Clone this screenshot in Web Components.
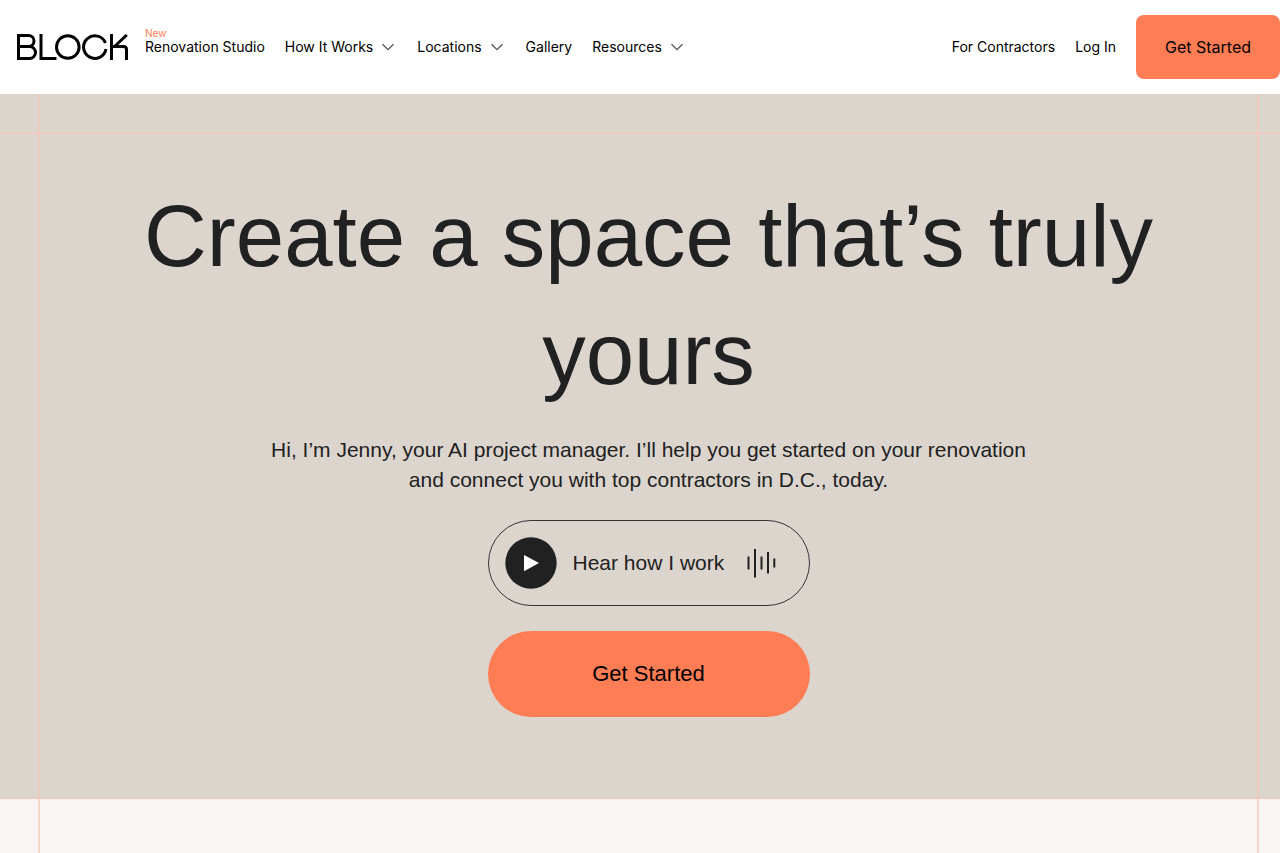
<!DOCTYPE html>
<html lang="en">
<head>
<meta charset="utf-8">
<meta name="viewport" content="width=device-width, initial-scale=1">
<title>Block Renovation</title>
<style>
  :root { --coral: #ff7d55; --ink: #212121; --sand: #dcd5ce; --paper: #f7f6f4; --rule: #f3c6b8; --rule-soft: #edcabd; --display: "Liberation Sans", Arial, sans-serif; }
  body { margin: 0; min-height: 100vh; display: flex; flex-direction: column; background: var(--paper); color: var(--ink); font-family: Inter, sans-serif; }
  block-hero { flex: none; }
  block-section { flex: 1; }
</style>
</head>
<body>
<block-header>
  <block-logo slot="logo"></block-logo>
  <nav-item href="#studio" tag="New">Renovation Studio</nav-item>
  <nav-item menu>How It Works</nav-item>
  <nav-item menu>Locations</nav-item>
  <nav-item href="#gallery">Gallery</nav-item>
  <nav-item menu>Resources</nav-item>
  <nav-item slot="account" href="#contractors">For Contractors</nav-item>
  <nav-item slot="account" href="#login">Log In</nav-item>
  <cta-button slot="account" kind="nav">Get Started</cta-button>
</block-header>
<block-hero>
  <span slot="title">Create a space that’s truly yours</span>
  <span slot="intro">Hi, I’m Jenny, your AI project manager. I’ll help you get started on your renovation and connect you with top contractors in D.C., today.</span>
  <audio-button>Hear how I work</audio-button>
  <cta-button>Get Started</cta-button>
</block-hero>
<block-section></block-section>

<script>
const define = (name, markup, setup) => {
  const template = document.createElement('template');
  template.innerHTML = markup;
  customElements.define(name, class extends HTMLElement {
    constructor() {
      super();
      this.attachShadow({ mode: 'open' }).append(template.content.cloneNode(true));
    }
    connectedCallback() { if (setup) setup(this, this.shadowRoot); }
  });
};

define('block-logo', `
  <style>
    :host { display: block; }
    a, svg { display: block; }
  </style>
  <a href="#home" aria-label="Block home">
    <svg width="112" height="26" viewBox="0 0 112 26" fill="none" stroke="#000" stroke-width="3" aria-hidden="true">
      <path d="M1.5 12.500V1.500H11.500a5.500 5.500 0 0 1 0 11H1.500M11.500 12.500h1a6 6 0 0 1 0 12H1.500V11"/>
      <path d="M24 0V24.5H39.5"/>
      <circle cx="50.8" cy="13" r="11.3"/>
      <path d="M88.4 9A11.3 11.3 0 1 0 89 15"/>
      <path d="M94.5 0V26M94.500 12.500H106.500Q109.500 12.500 109.500 15.500V26M97.500 12.500L109.800 1"/>
    </svg>
  </a>`);

define('nav-item', `
  <style>
    :host { display: grid; position: relative; font-size: 14px; line-height: 16px; color: #000; white-space: nowrap; }
    a, button { display: flex; align-items: center; gap: 8px; margin: 0; padding: 0; border: 0; background: none; color: inherit; font: inherit; text-decoration: none; cursor: pointer; }
    button { padding-right: 2px; }
    .tag { position: absolute; left: 0; bottom: 100%; color: var(--coral); font-size: 10px; line-height: 12px; }
    svg { display: block; }
    [hidden] { display: none; }
  </style>
  <span class="tag" hidden></span>
  <a><slot></slot></a>`,
  (host, root) => {
    if (host.hasAttribute('tag')) {
      const tag = root.querySelector('.tag');
      tag.textContent = host.getAttribute('tag');
      tag.hidden = false;
    }
    const link = root.querySelector('a');
    if (host.hasAttribute('menu')) {
      const button = document.createElement('button');
      button.type = 'button';
      button.setAttribute('aria-haspopup', 'true');
      button.innerHTML = '<slot></slot><svg width="14" height="8" viewBox="0 0 14 8" fill="none" stroke="#555" stroke-width="1.3" aria-hidden="true"><path d="M1.5 1.2L7 6.7L12.5 1.2"/></svg>';
      link.replaceWith(button);
    } else {
      link.href = host.getAttribute('href');
    }
  });

define('cta-button', `
  <style>
    :host { display: grid; }
    button { height: 86px; margin: 0; padding: 0 28px; border: 0; border-radius: 43px; background: var(--coral); color: #000; font: 22px/28px var(--display); white-space: nowrap; cursor: pointer; }
    :host([kind="nav"]) button { height: 64px; min-width: 144px; padding: 0 20px; border-radius: 8px; font: 16px/24px Inter, sans-serif; }
  </style>
  <button type="button"><slot></slot></button>`);

define('audio-button', `
  <style>
    :host { display: grid; }
    button { display: flex; align-items: center; height: 86px; box-sizing: border-box; margin: 0; padding: 0 33px 0 16px; border: 1px solid #333; border-radius: 43px; background: none; color: var(--ink); font: 21px/28px var(--display); white-space: nowrap; cursor: pointer; }
    .label { flex: 1; padding-left: 16px; text-align: left; }
    svg { display: block; flex: none; }
  </style>
  <button type="button">
    <svg width="52" height="52" viewBox="0 0 52 52" aria-hidden="true"><circle cx="26" cy="26" r="25.7" fill="#212121"/><path d="M19 18L34 26L19 34.3Z" fill="#fff"/></svg>
    <span class="label"><slot></slot></span>
    <svg width="30" height="30" viewBox="0 0 30 30" fill="none" stroke="#212121" stroke-width="2" aria-hidden="true"><path d="M2.5 8.5V21.5M9 1V29.5M15.5 8.5V21.5M22 4V25.5M28.3 10.5V19.5"/></svg>
  </button>`);

define('block-header', `
  <style>
    :host { display: block; background: #fff; }
    header { display: flex; align-items: center; justify-content: space-between; min-height: 94px; padding-left: 17px; }
    nav, .account { display: flex; align-items: center; gap: 20px; }
    .main { display: flex; align-items: center; gap: 16px; }
  </style>
  <header>
    <div class="main"><slot name="logo"></slot><nav aria-label="Main"><slot></slot></nav></div>
    <div class="account"><slot name="account"></slot></div>
  </header>`);

define('block-hero', `
  <style>
    :host { display: block; background: linear-gradient(var(--rule-soft), var(--rule-soft)) 0 38px / 100% 2px no-repeat var(--sand); border-bottom: 1px solid var(--rule); }
    .frame { margin: 0 21px 0 38px; border: solid var(--rule-soft); border-width: 0 2px; padding: 83px 64px 81px; display: flex; flex-direction: column; align-items: center; text-align: center; }
    h1 { margin: 0; font: 400 87px/118px var(--display); }
    p { max-width: 770px; margin: 22px 0 25px; font: 21px/30px var(--display); }
    .actions { display: grid; gap: 25px; width: 322px; }
  </style>
  <section class="frame">
    <h1><slot name="title"></slot></h1>
    <p><slot name="intro"></slot></p>
    <div class="actions"><slot></slot></div>
  </section>`);

define('block-section', `
  <style>
    :host { display: grid; background: var(--paper); }
    .frame { margin: 0 21px 0 38px; border: solid #f7d6cc; border-width: 0 2px; }
  </style>
  <div class="frame"></div>`);
</script>
</body>
</html>
